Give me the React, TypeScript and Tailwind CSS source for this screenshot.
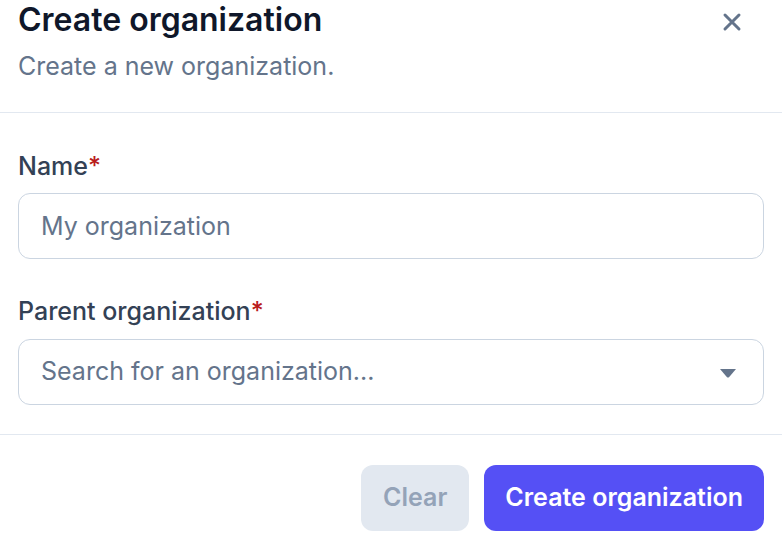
import * as React from "react"

function CloseIcon() {
    return (
        <svg width="20" height="20" viewBox="0 0 20 20" fill="none" stroke="currentColor" strokeWidth="3" strokeLinecap="round">
            <path d="M3 3L17 17M17 3L3 17" />
        </svg>
    )
}

function Label({ children }: { children: React.ReactNode }) {
    return (
        <label className="block text-[25px] leading-[30px] font-medium text-[#334155]">
            {children}
            <span className="text-[#b91c1c]">*</span>
        </label>
    )
}

export default function App() {
    const [name, setName] = React.useState("")

    return (
        <div className="w-[782px] h-[536px] bg-white overflow-hidden" style={{ fontFamily: "Inter, 'Noto Sans', sans-serif" }}>
            {/* Header */}
            <div className="flex items-start justify-between pl-[18px] pr-[40px] h-[113px] border-b border-[#e2e8f0]">
                <div>
                    <h2 className="text-[32px] leading-[40px] font-semibold text-[#0f172a]">Create organization</h2>
                    <p className="text-[25px] leading-[32px] text-[#64748b] mt-[10px]">Create a new organization.</p>
                </div>
                <button className="mt-[12px] text-[#64748b]">
                    <CloseIcon />
                </button>
            </div>

            {/* Body */}
            <div className="px-[18px] pt-[38px] pb-[29px] flex flex-col border-b border-[#e2e8f0]">
                <Label>Name</Label>
                <input
                    value={name}
                    onChange={(e) => setName(e.target.value)}
                    placeholder="My organization"
                    className="mt-[12px] h-[66px] w-full rounded-[12px] border border-[#cbd5e1] px-[22px] text-[25px] text-[#0f172a] placeholder:text-[#64748b] outline-none"
                />

                <div className="mt-[37px]">
                    <Label>Parent organization</Label>
                </div>
                <div className="mt-[13px] h-[66px] w-full rounded-[12px] border border-[#cbd5e1] pl-[22px] pr-[26px] flex items-center justify-between">
                    <span className="text-[25px] text-[#64748b]">Search for an organization...</span>
                    <svg width="18" height="10" viewBox="0 0 18 10" className="text-[#64748b] mt-[2px]">
                        <path d="M1 1H17L10 9.2Q9 10 8 9.2Z" fill="currentColor" />
                    </svg>
                </div>
            </div>

            {/* Footer */}
            <div className="flex justify-end gap-[15px] pr-[18px] pt-[30px]">
                <button disabled className="h-[66px] px-[22px] rounded-[12px] bg-[#e2e8f0] text-[25px] font-semibold text-[#94a3b8]">
                    Clear
                </button>
                <button className="h-[66px] px-[21px] rounded-[12px] bg-[#5550f5] text-[25px] font-semibold text-white">
                    Create organization
                </button>
            </div>
        </div>
    )
}
